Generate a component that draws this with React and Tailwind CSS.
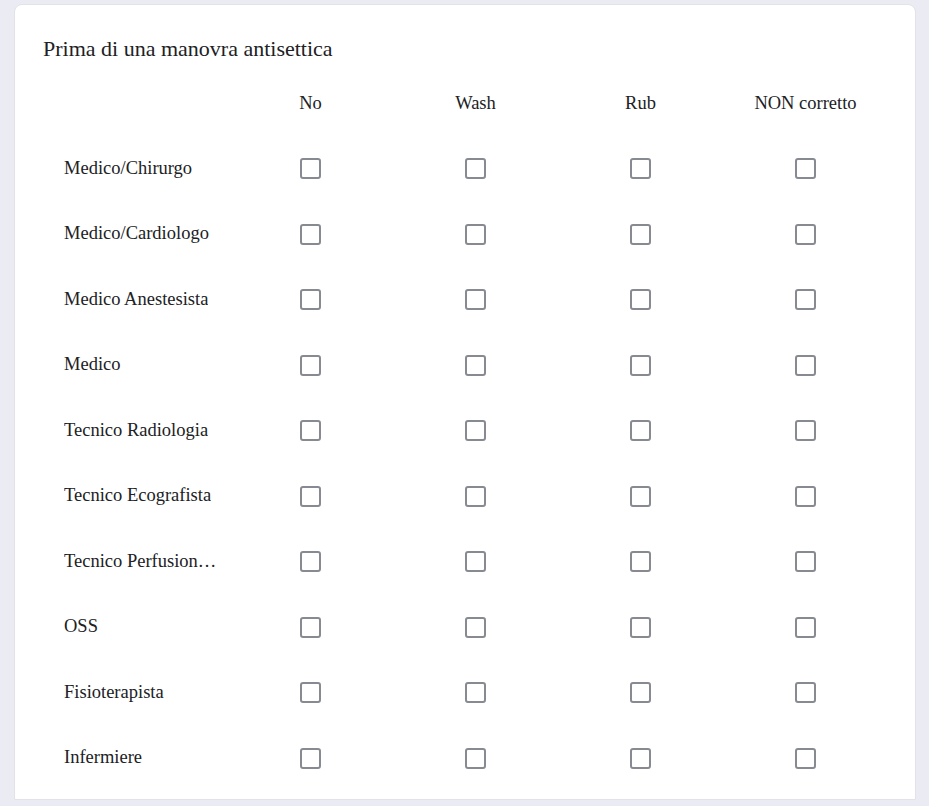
const COLUMNS = ['No', 'Wash', 'Rub', 'NON corretto'];

const ROLES = [
  'Medico/Chirurgo',
  'Medico/Cardiologo',
  'Medico Anestesista',
  'Medico',
  'Tecnico Radiologia',
  'Tecnico Ecografista',
  'Tecnico Perfusionista',
  'OSS',
  'Fisioterapista',
  'Infermiere',
];

function Box() {
  return (
    <div className="w-[21px] h-[21px] rounded-[3px] border-2 border-[#878b91] bg-white" />
  );
}

export default function App() {
  return (
    <div className="min-h-[806px] bg-[#ebebf4] pt-[4px] pl-[14px] pr-[13px] pb-[9px] font-['Liberation_Serif',serif] text-[#202124]">
      <div className="bg-white rounded-t-[8px] border border-[#e2e3ea] pt-[31px] pl-[28px] pr-[26px] pb-[8px]">
        <h2 className="text-[22px] leading-[26px] mb-[10px]">Prima di una manovra antisettica</h2>
        <div className="grid grid-cols-[185px_repeat(4,165px)]">
          <div className="h-[64px]" />
          {COLUMNS.map((c) => (
            <div key={c} className="h-[64px] flex items-center justify-center text-[18.5px]">{c}</div>
          ))}
          {ROLES.map((role) => (
            <div key={role} className="contents">
              <div className="h-[65.5px] flex items-center pl-[21px] pr-[10px] text-[18.5px] min-w-0">
                <span className="truncate">{role}</span>
              </div>
              {COLUMNS.map((c) => (
                <div key={c} className="h-[65.5px] flex items-center justify-center">
                  <Box />
                </div>
              ))}
            </div>
          ))}
        </div>
      </div>
    </div>
  );
}
